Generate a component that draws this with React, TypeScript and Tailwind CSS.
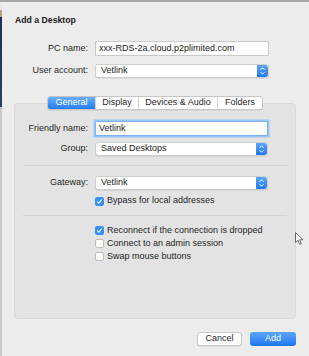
import React from 'react';

const font = { fontFamily: '"Liberation Sans", Arial, sans-serif' };

function Stepper() {
  return (
    <div className="w-[11px] h-full shrink-0 rounded-r-[3px] bg-gradient-to-b from-[#5aa6f8] to-[#1d78f2] flex items-center justify-center">
      <svg width="7" height="10" viewBox="0 0 7 10" fill="none">
        <path d="M1.5 3.8 L3.5 1.8 L5.5 3.8" stroke="white" strokeWidth="1" />
        <path d="M1.5 6.2 L3.5 8.2 L5.5 6.2" stroke="white" strokeWidth="1" />
      </svg>
    </div>
  );
}

function Select({ value }: { value: string }) {
  return (
    <div className="h-[14px] w-full flex items-stretch bg-white rounded-[3px] border border-[#cfcfcf] shadow-[0_0.5px_0.5px_rgba(0,0,0,0.15)]">
      <div className="flex-1 flex items-center pl-[5px] text-[9px] text-[#1a1a1a]">{value}</div>
      <Stepper />
    </div>
  );
}

function Checkbox({ checked, label }: { checked: boolean; label: string }) {
  return (
    <div className="flex items-center h-full">
      {checked ? (
        <div className="w-[9px] h-[9px] rounded-[2px] bg-[#3a8ef6] flex items-center justify-center">
          <svg width="7" height="7" viewBox="0 0 7 7" fill="none">
            <path d="M1.3 3.7 L2.8 5.2 L5.8 1.5" stroke="white" strokeWidth="1.1" />
          </svg>
        </div>
      ) : (
        <div className="w-[9px] h-[9px] rounded-[2px] bg-white border border-[#bdbdbd]" />
      )}
      <span className="ml-[3px] text-[9px] text-[#1f1f1f]">{label}</span>
    </div>
  );
}

export default function App() {
  const tabs = [
    { name: 'General', w: 'w-[47px]', active: true },
    { name: 'Display', w: 'w-[43px]', active: false },
    { name: 'Devices & Audio', w: 'w-[79px]', active: false },
    { name: 'Folders', w: 'w-[45px]', active: false },
  ];

  return (
    <div className="relative w-[309px] h-[356px] overflow-hidden bg-[#ececec] border-t-2 border-[#a7a7a7] flex" style={font}>
      {/* Desktop showing at the left edge */}
      <div className="w-[2px] h-full flex flex-col shrink-0">
        <div className="h-[8px] bg-[#e6e6e6]" />
        <div className="h-[7px] bg-[#b8a085]" />
        <div className="h-[90px] bg-gradient-to-b from-[#1d3055] to-[#2a3f63]" />
        <div className="flex-1 bg-[#c9c9c9]" />
      </div>

      <div className="flex-1 flex flex-col">
        <div className="h-[12px] mt-[12px] pl-[13px] text-[8.7px] font-bold text-[#1a1a1a] leading-[12px]">
          Add a Desktop
        </div>

        {/* Top fields */}
        <div className="mt-[15px] flex items-center h-[15px]">
          <div className="w-[86px] text-right text-[9px] text-[#262626]">PC name:</div>
          <div className="ml-[7px] w-[174px] h-[15px] bg-white border border-[#c9c9c9] flex items-center pl-[3px] text-[9px] text-[#1a1a1a]">
            xxx-RDS-2a.cloud.p2plimited.com
          </div>
        </div>
        <div className="mt-[8px] flex items-center h-[14px]">
          <div className="w-[86px] text-right text-[9px] text-[#262626]">User account:</div>
          <div className="ml-[7px] w-[174px]">
            <Select value="Vetlink" />
          </div>
        </div>

        {/* Tabs */}
        <div className="mt-[18px] relative z-10 flex justify-center pr-[0px]">
          <div className="flex h-[14px] ml-[-1px] rounded-[3px] border border-[#c6c6c6] bg-white overflow-hidden shadow-[0_0.5px_0.5px_rgba(0,0,0,0.1)]">
            {tabs.map((t, i) => (
              <div
                key={t.name}
                className={`${t.w} flex items-center justify-center text-[9px] ${
                  t.active
                    ? 'bg-gradient-to-b from-[#68aefa] to-[#1f7cf6] text-white'
                    : 'text-[#1f1f1f]'
                } ${i > 0 ? 'border-l border-[#d6d6d6]' : ''}`}
              >
                {t.name}
              </div>
            ))}
          </div>
        </div>

        {/* Group box */}
        <div className="-mt-[7px] ml-[12px] w-[282px] h-[216px] rounded-[4px] bg-[#e3e3e3] border border-[#d9d9d9] flex flex-col pt-[17px]">
          <div className="flex items-center h-[15px]">
            <div className="w-[73px] text-right text-[9px] text-[#262626]">Friendly name:</div>
            <div className="ml-[7px] w-[173px] h-[15px] bg-white border border-[#7db1f2] ring-[1.5px] ring-[#9cc5f7] flex items-center pl-[3px] text-[9px] text-[#1a1a1a]">
              Vetlink
            </div>
          </div>
          <div className="mt-[6px] flex items-center h-[14px]">
            <div className="w-[73px] text-right text-[9px] text-[#262626]">Group:</div>
            <div className="ml-[7px] w-[173px]">
              <Select value="Saved Desktops" />
            </div>
          </div>

          <div className="mt-[9px] mx-[8px] h-px bg-[#d2d2d2]" />

          <div className="mt-[10px] flex items-center h-[14px]">
            <div className="w-[73px] text-right text-[9px] text-[#262626]">Gateway:</div>
            <div className="ml-[7px] w-[173px]">
              <Select value="Vetlink" />
            </div>
          </div>
          <div className="mt-[5px] h-[12px] ml-[80px]">
            <Checkbox checked label="Bypass for local addresses" />
          </div>

          <div className="mt-[8px] mx-[8px] h-px bg-[#d2d2d2]" />

          <div className="mt-[8px] ml-[80px] flex flex-col">
            <div className="h-[13px]">
              <Checkbox checked label="Reconnect if the connection is dropped" />
            </div>
            <div className="h-[13px]">
              <Checkbox checked={false} label="Connect to an admin session" />
            </div>
            <div className="h-[13px]">
              <Checkbox checked={false} label="Swap mouse buttons" />
            </div>
          </div>
        </div>

        {/* Buttons */}
        <div className="mt-[13px] flex justify-end pr-[13px] gap-[8px]">
          <div className="w-[45px] h-[14px] rounded-[3px] bg-white border border-[#c9c9c9] shadow-[0_0.5px_0.5px_rgba(0,0,0,0.12)] flex items-center justify-center text-[9px] text-[#1f1f1f]">
            Cancel
          </div>
          <div className="w-[46px] h-[14px] rounded-[3px] bg-gradient-to-b from-[#5ba6fa] to-[#1b76f3] flex items-center justify-center text-[9px] text-white">
            Add
          </div>
        </div>
      </div>

      {/* Mouse cursor */}
      <svg className="absolute left-[295px] top-[230px]" width="9" height="14" viewBox="0 0 9 14" fill="none">
        <path d="M0.5 0.5 L0.5 10.5 L3 8.3 L4.8 12.5 L6.3 11.8 L4.6 7.8 L8 7.8 Z" fill="#fafafa" stroke="#5a5a5a" strokeWidth="0.9" strokeLinejoin="round" />
      </svg>
    </div>
  );
}
